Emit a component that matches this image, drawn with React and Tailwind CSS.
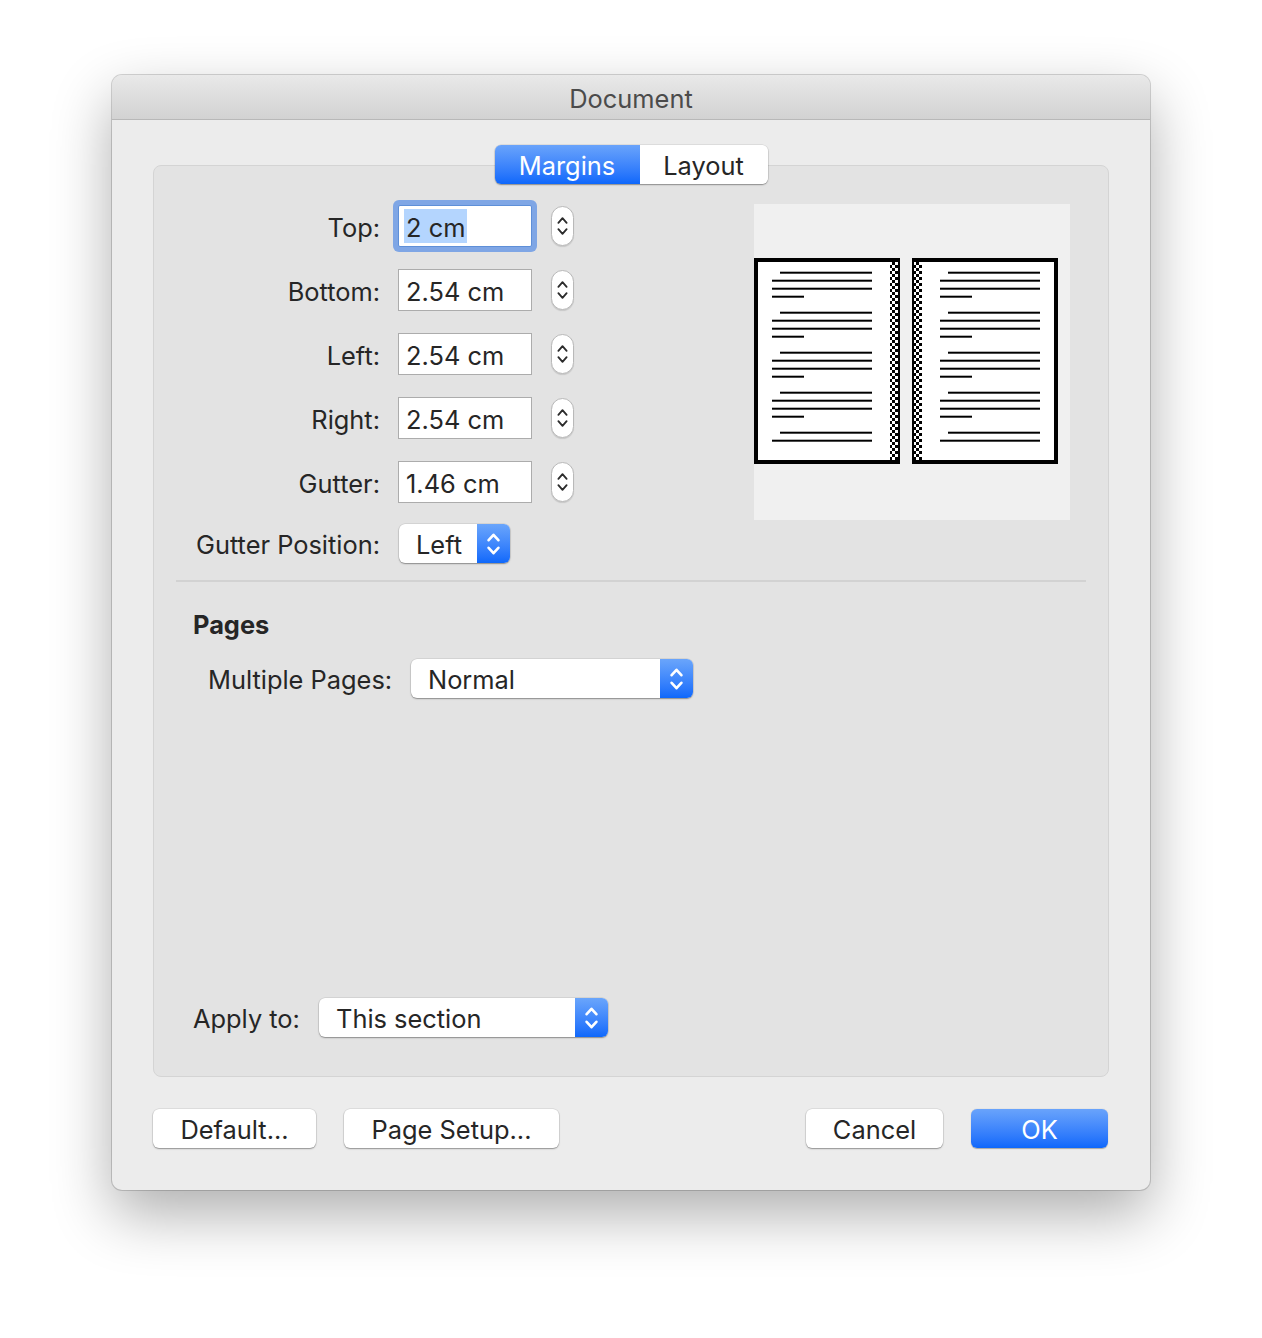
import React from 'react'

function UpDown({ color = '#fff', w = 13, h = 26, sw = 2.4 }) {
  return (
    <svg width={w} height={h} viewBox="0 0 12 24" fill="none" stroke={color} strokeWidth={sw} strokeLinecap="round" strokeLinejoin="round">
      <path d="M1.5 8.5 L6 3.5 L10.5 8.5" />
      <path d="M1.5 15.5 L6 20.5 L10.5 15.5" />
    </svg>
  )
}

function T({ children }) {
  return <span className="relative top-[2px]">{children}</span>
}

function Stepper() {
  return (
    <div className="ml-[19px] w-[23px] h-[40px] rounded-full bg-white border border-[#b9b9b9] shadow-[0_1px_1px_rgba(0,0,0,0.12)] flex items-center justify-center">
      <UpDown color="#2b2b2b" w={11} h={24} sw={2} />
    </div>
  )
}

function Field({ value, focused }) {
  if (focused) {
    return (
      <div className="ml-[18px] w-[134px] h-[42px] bg-white border border-[#5e8fd8] rounded-[2px] shadow-[0_0_0_5px_#7fa6e5] flex items-center pl-[5px]">
        <span className="bg-[#b4d5fe] h-[34px] leading-[38px] px-[2px]">{value}</span>
      </div>
    )
  }
  return (
    <div className="ml-[18px] w-[134px] h-[42px] bg-white border border-[#acacac] flex items-center pl-[7px]">
      <T>{value}</T>
    </div>
  )
}

function Select({ value, width }) {
  return (
    <div
      className="h-[39px] flex rounded-[6px] bg-white shadow-[0_1px_1.5px_rgba(0,0,0,0.35),0_0_0_0.5px_rgba(0,0,0,0.12)]"
      style={{ width }}
    >
      <div className="flex-1 flex items-center pl-[17px]"><T>{value}</T></div>
      <div className="w-[33px] rounded-r-[6px] bg-gradient-to-b from-[#6aa5fb] to-[#0d68fb] flex items-center justify-center">
        <UpDown />
      </div>
    </div>
  )
}

function Button({ children, className = '', primary }) {
  return (
    <div
      className={
        'h-[39px] rounded-[6px] flex items-center justify-center ' +
        (primary
          ? 'bg-gradient-to-b from-[#69a3fb] to-[#0c67fb] text-white shadow-[0_0.5px_1px_rgba(0,0,0,0.3)] '
          : 'bg-white shadow-[0_1px_1.5px_rgba(0,0,0,0.35),0_0_0_0.5px_rgba(0,0,0,0.12)] ') +
        className
      }
    >
      <T>{children}</T>
    </div>
  )
}

function Preview() {
  const left = { ind: [26, 118], full: [18, 118], short: [18, 50] }
  const right = { ind: [194, 286], full: [186, 286], short: [186, 218] }
  const lines = []
  ;[left, right].forEach((p, pi) => {
    for (let k = 0; k < 5; k++) {
      const y0 = 68.7 + 40 * k
      const set = k === 4 ? ['ind', 'full'] : ['ind', 'full', 'full', 'short']
      set.forEach((t, i) => {
        const [a, b] = p[t]
        lines.push(<rect key={pi + '-' + k + '-' + i} x={a} y={y0 + i * 8 - 1} width={b - a} height={2} fill="#000" />)
      })
    }
  })
  return (
    <svg width="316" height="316" viewBox="0 0 316 316" className="bg-[#f0f0f0]">
      <defs>
        <pattern id="chk" width="6" height="6" patternUnits="userSpaceOnUse" x="0" y="58">
          <rect width="6" height="6" fill="#fff" />
          <rect width="3" height="3" fill="#000" />
          <rect x="3" y="3" width="3" height="3" fill="#000" />
        </pattern>
      </defs>
      <rect x="2" y="56" width="142" height="202" fill="#fff" stroke="#000" strokeWidth="4" />
      <rect x="160" y="56" width="142" height="202" fill="#fff" stroke="#000" strokeWidth="4" />
      <rect x="136" y="58" width="8" height="198" fill="url(#chk)" />
      <rect x="160" y="58" width="8" height="198" fill="url(#chk)" />
      {lines}
    </svg>
  )
}

export default function App() {
  const rows = [
    ['Top:', '2 cm', true],
    ['Bottom:', '2.54 cm'],
    ['Left:', '2.54 cm'],
    ['Right:', '2.54 cm'],
    ['Gutter:', '1.46 cm'],
  ]
  return (
    <div className="w-[1262px] h-[1338px] bg-white pt-[75px] pl-[112px] font-['Inter','Liberation_Sans',sans-serif] text-[25.4px] text-[#262626]">
      <div className="w-[1038px] h-[1115px] rounded-[10px] overflow-hidden bg-[#ececec] shadow-[0_24px_60px_rgba(0,0,0,0.32),0_0_0_1px_rgba(0,0,0,0.16)] flex flex-col">
        {/* title bar */}
        <div className="h-[45px] shrink-0 bg-gradient-to-b from-[#e9e9e9] to-[#d2d2d2] border-b border-[#b8b8b8] flex items-center justify-center text-[#4b4b4b]">
          <T>Document</T>
        </div>

        <div className="flex-1 flex flex-col pt-[25px]">
          {/* tabs */}
          <div className="relative z-10 flex justify-center">
            <div className="flex h-[39px] rounded-[6px] shadow-[0_1px_1.5px_rgba(0,0,0,0.35),0_0_0_0.5px_rgba(0,0,0,0.12)]">
              <div className="w-[145px] rounded-l-[6px] bg-gradient-to-b from-[#69a3fb] to-[#0c67fb] text-white flex items-center justify-center"><T>Margins</T></div>
              <div className="w-[128px] rounded-r-[6px] bg-white flex items-center justify-center"><T>Layout</T></div>
            </div>
          </div>

          {/* tab box */}
          <div className="mx-[41px] -mt-[19px] h-[912px] shrink-0 rounded-[8px] bg-[#e3e3e3] border border-[#d4d4d4] flex flex-col">
            <div className="flex items-start">
              <div className="pt-[39px] flex flex-col">
                {rows.map(([label, value, focused], i) => (
                  <div key={label} className={'flex items-center h-[42px] ' + (i > 0 ? 'mt-[22px]' : '')}>
                    <div className="w-[226px] text-right"><T>{label}</T></div>
                    <Field value={value} focused={focused} />
                    <Stepper />
                  </div>
                ))}
                <div className="flex items-center h-[39px] mt-[21px]">
                  <div className="w-[226px] text-right"><T>Gutter Position:</T></div>
                  <div className="ml-[19px]">
                    <Select value="Left" width={111} />
                  </div>
                </div>
              </div>
              <div className="ml-auto mr-[38px] mt-[38px]">
                <Preview />
              </div>
            </div>

            <div className="mx-[22px] mt-[17px] h-[2px] bg-[#d2d2d2]" />

            <div className="pl-[39px] mt-[26px] leading-[30px] font-bold"><T>Pages</T></div>

            <div className="pl-[54px] mt-[21px] flex items-center h-[39px]">
              <div className="w-[203px]"><T>Multiple Pages:</T></div>
              <Select value="Normal" width={282} />
            </div>

            <div className="mt-auto mb-[39px] pl-[39px] flex items-center h-[39px]">
              <div className="w-[126px]"><T>Apply to:</T></div>
              <Select value="This section" width={289} />
            </div>
          </div>

          {/* buttons */}
          <div className="mt-[32px] pl-[41px] pr-[42px] flex items-center">
            <Button className="w-[163px]">Default...</Button>
            <Button className="w-[215px] ml-[28px]">Page Setup...</Button>
            <Button className="w-[137px] ml-auto">Cancel</Button>
            <Button className="w-[137px] ml-[28px]" primary>OK</Button>
          </div>
        </div>
      </div>
    </div>
  )
}
